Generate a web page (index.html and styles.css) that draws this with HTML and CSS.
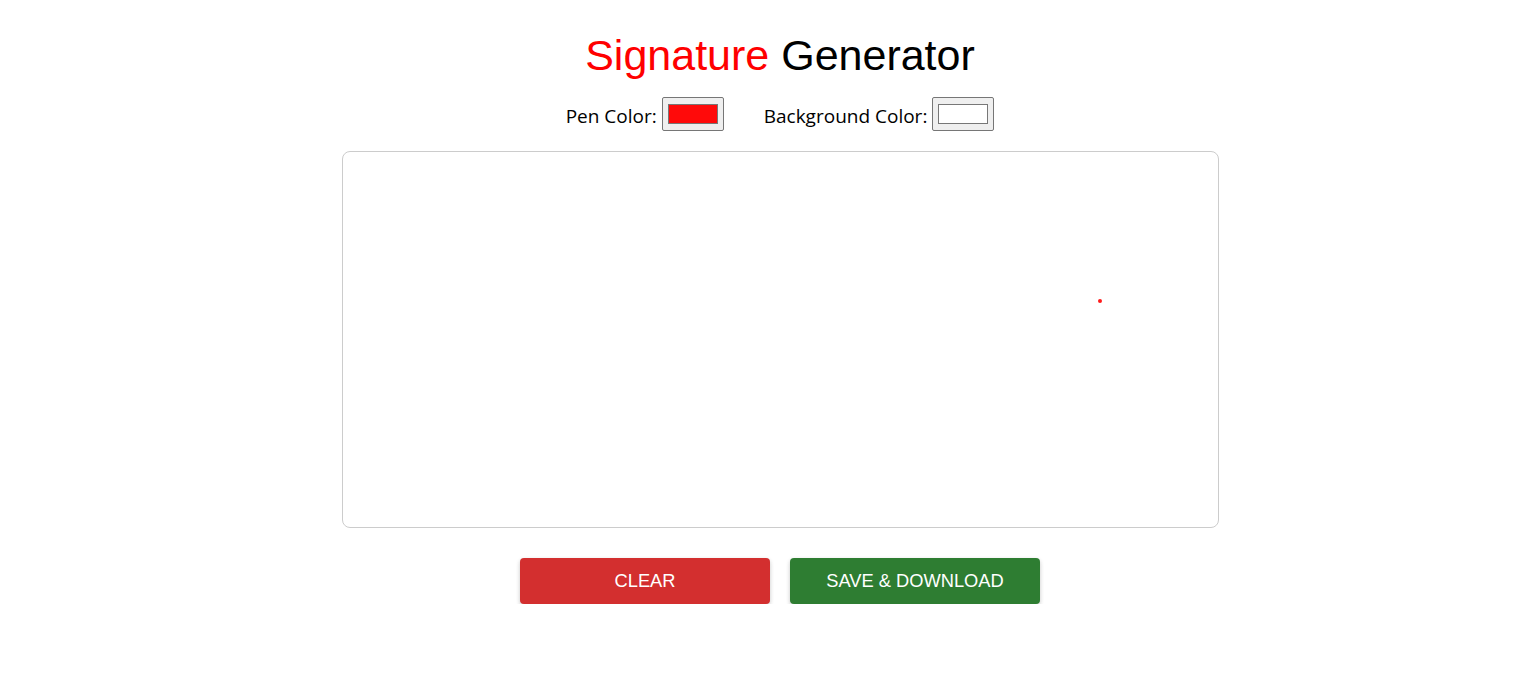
FILE: index.html
```html
<!DOCTYPE html>
<html>
<head>
<meta charset="utf-8">
<link rel="stylesheet" href="styles.css">
</head>
<body>
<div class="app">
  <h1 class="title"><span class="red">Signature</span> Generator</h1>
  <div class="controls">
    <label class="control"><span class="label-text">Pen Color:</span><span class="picker"><span class="swatch swatch-red"></span></span></label>
    <label class="control"><span class="label-text">Background Color:</span><span class="picker"><span class="swatch swatch-white"></span></span></label>
  </div>
  <div class="pad">
    <span class="dot"></span>
  </div>
  <div class="actions">
    <button class="btn btn-clear">Clear</button>
    <button class="btn btn-save">Save &amp; Download</button>
  </div>
</div>
</body>
</html>
```
FILE: styles.css
```css
html, body {
  margin: 0;
  padding: 0;
  background: #fff;
}
.app {
  display: flex;
  flex-direction: column;
  align-items: center;
  padding-top: 29px;
  padding-left: 24px;
}
.title {
  margin: 0;
  font-family: "Liberation Sans", Arial, sans-serif;
  font-weight: 400;
  font-size: 43px;
  line-height: 52px;
  color: #000;
}
.red { color: #ff0000; }
.controls {
  display: flex;
  gap: 40px;
  margin-top: 16px;
  font-family: "Open Sans", "Noto Sans", sans-serif;
  font-size: 19px;
  color: #000;
}
.control {
  display: flex;
  align-items: center;
  gap: 5px;
}
.label-text {
  padding-top: 4px;
}
.picker {
  box-sizing: border-box;
  width: 62px;
  height: 34px;
  background: #efefef;
  border: 1px solid #767676;
  border-radius: 2px;
  display: flex;
  align-items: center;
  justify-content: center;
}
.swatch {
  box-sizing: border-box;
  width: 50px;
  height: 20px;
  border: 1px solid #777;
}
.swatch-red { background: #ff0a0a; }
.swatch-white { background: #fff; }
.pad {
  box-sizing: border-box;
  position: relative;
  width: 877px;
  height: 377px;
  margin-top: 20px;
  border: 1px solid #ccc;
  border-radius: 8px;
  background: #fff;
}
.dot {
  position: absolute;
  left: 755px;
  top: 147px;
  width: 4px;
  height: 4px;
  border-radius: 50%;
  background: #ff1a1a;
}
.actions {
  display: flex;
  gap: 20px;
  margin-top: 30px;
}
.btn {
  width: 250px;
  height: 46px;
  border: none;
  border-radius: 4px;
  color: #fff;
  font-family: "Liberation Sans", Arial, sans-serif;
  font-size: 18.3px;
  text-transform: uppercase;
  box-shadow: 0 2px 4px rgba(0,0,0,0.22);
  cursor: pointer;
}
.btn-clear { background: #d32f2f; }
.btn-save { background: #2e7d32; }
```
